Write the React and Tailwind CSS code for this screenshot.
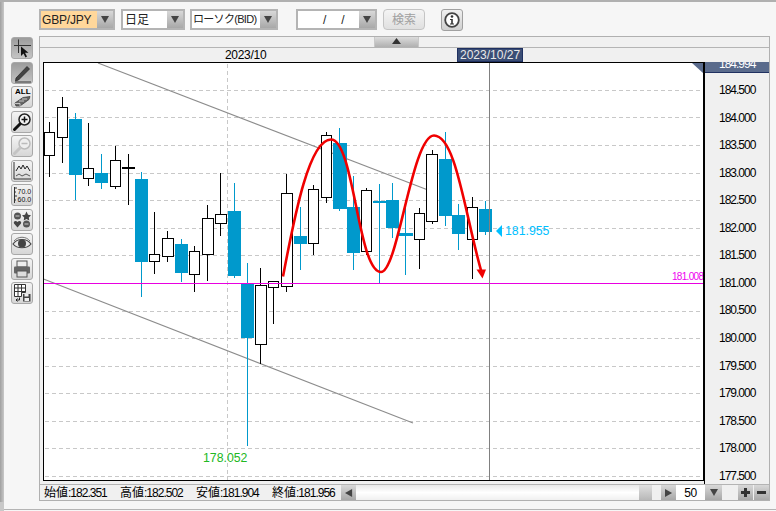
import React from "react";

const FONT = "font-['Liberation_Sans','Noto_Sans_CJK_JP',sans-serif]";
const GRID = [90, 117, 145, 173, 200, 228, 255.5, 311, 338, 366, 393, 421, 448, 476];
const PRICES = ["184.500","184.000","183.500","183.000","182.500","182.000","181.500","181.000","180.500","180.000","179.500","179.000","178.500","178.000","177.500"];
// cx, wickTop, wickBottom, bodyLeft, bodyRight, bodyTop, bodyBottom, kind
const C = [
  [49,122,177,44,54,132,155,"w"],[62,97,163,57,67,107,137,"w"],[75,113,200,69,81,119,175,"b"],[88,123,186,83,93,168,178,"w"],
  [101,154,189,95,107,173,183,"b"],[115,146,189,110,120,160,186,"w"],[128,154,205,122,134,167,169,"k"],[141,172,297,135,147,179,262,"b"],
  [154,212,274,149,159,254,261,"w"],[167,231,262,162,173,238,256,"w"],[181,239,282,175,187,244,273,"b"],[194,246,292,189,199,251,274,"w"],
  [207,205,281,202,213,218,254,"w"],[220,173,236,215,226,214,223,"w"],[234,183,278,228,240,211,276,"b"],[247,263,446,241,253,284,338,"b"],
  [260,268,364,255,266,285,344,"w"],[273,281,324,268,278,281,287,"w"],[286,174,292,281,292,193,286,"w"],[300,207,270,294,306,236,244,"b"],
  [313,185,255,308,318,189,243,"w"],[326,132,203,321,331,135,197,"w"],[339,128,211,333,346,143,209,"b"],[353,176,270,347,359,207,253,"b"],
  [366,188,255,361,371,190,251,"w"],[379,184,283,373,385,201,203,"b"],[392,183,238,386,398,200,228,"b"],[405,200,275,399,412,233,236,"b"],
  [419,208,269,414,424,213,239,"w"],[432,150,224,426,437,154,221,"w"],[445,132,226,439,451,159,216,"b"],[458,204,250,452,464,215,234,"b"],
  [472,197,279,467,477,207,239,"w"],[485,201,235,479,491,209,232,"b"],
];

function Candle({ c }) {
  const [x, t, b, l, r, bt, bb, k] = c;
  const col = k === "b" ? "#0099cc" : "#000";
  return (
    <g shapeRendering="crispEdges">
      <line x1={x + 0.5} x2={x + 0.5} y1={t} y2={b} stroke={col} />
      {k === "w" ? (
        <rect x={l + 0.5} y={bt + 0.5} width={r - l} height={bb - bt} fill="#fff" stroke="#000" />
      ) : (
        <rect x={l} y={bt} width={r - l + 1} height={bb - bt} fill={col} />
      )}
    </g>
  );
}

function Plot() {
  return (
    <svg width="661" height="419" viewBox="43 62 661 419" className="block shrink-0">
      <rect x="43" y="62" width="661" height="419" fill="#fff" />
      <g shapeRendering="crispEdges" stroke="#c8c8c8" strokeDasharray="4 3">
        {GRID.map((y) => <line key={y} x1="45" x2="702" y1={Math.floor(y) + 0.5} y2={Math.floor(y) + 0.5} />)}
        <line x1="227.5" x2="227.5" y1="64" y2="480" />
      </g>
      <line x1="98" y1="63" x2="428" y2="190" stroke="#8c8c8c" strokeWidth="1.1" />
      <line x1="43.5" y1="279" x2="413" y2="423" stroke="#8c8c8c" strokeWidth="1.1" />
      {C.map((c) => <Candle key={c[0]} c={c} />)}
      <line x1="44" x2="703" y1="283.5" y2="283.5" stroke="#e800e0" shapeRendering="crispEdges" />
      <line x1="489.5" x2="489.5" y1="63" y2="480" stroke="#808080" shapeRendering="crispEdges" />
      <path d="M283 276.5C293 225 308 139.5 331 139.5C354 139.5 358 272 381 272C398 272 412 135.5 434 135.5C456 135.5 465 215 481.5 272" fill="none" stroke="#f00000" strokeWidth="2.6" />
      <polygon points="476.500,269.500 486,269.500 482.500,278.500" fill="#f00000" />
      <polygon points="692,63 703,63 703,73" fill="#5a6b8c" />
      <polygon points="502,225 502,237 496,231" fill="#00bfff" />
      <text x="505" y="235" fontSize="12.3" fill="#00bfff" fontFamily="Liberation Sans">181.955</text>
      <text x="203" y="462" fontSize="12.3" fill="#22b822" fontFamily="Liberation Sans">178.052</text>
      <text x="672" y="280" fontSize="10" letterSpacing="-0.7" fill="#f000f0" fontFamily="Liberation Sans">181.008</text>
      <rect x="43.5" y="62.5" width="660" height="418" fill="none" stroke="#000" shapeRendering="crispEdges" />
    </svg>
  );
}

const Arrow = ({ dir = "down", size = 8, fill = "#444" }) => {
  const pts = { down: "0,0 9,0 4.5,8", up: "4.5,0 9,6 0,6", left: "8,0 8,9 0,4.5", right: "0,0 8,4.5 0,9" }[dir];
  return <svg width={size} height={size} viewBox="0 0 9 9"><polygon points={pts} fill={fill} /></svg>;
};

const ArrowBtn = ({ w = "w-[17px]", dir = "down" }) => (
  <div className={`${w} h-full flex items-center justify-center bg-linear-to-b from-[#d8d8d8] to-[#a8a8a8]`}>
    <Arrow dir={dir} />
  </div>
);

function Combo({ className, field, children }) {
  return (
    <div className={`h-[21px] flex border-2 border-[#b4b4b4] bg-white ${className}`}>
      <div className={`flex-1 min-w-0 flex items-center text-[#222] whitespace-nowrap ${field}`}>{children}</div>
      <ArrowBtn w="w-[16px]" />
    </div>
  );
}

function Tool({ pressed, children }) {
  return (
    <div className={`w-[22px] h-[22px] shrink-0 rounded-[3px] border border-[#a8a8a8] ${pressed ? "bg-linear-to-b from-[#9c9c9c] to-[#c4c4c4]" : "bg-linear-to-b from-[#f4f4f4] to-[#d6d6d6]"}`}>
      {children}
    </div>
  );
}

const Ic = ({ children }) => <svg width="20" height="20" viewBox="0 0 20 20" className="block">{children}</svg>;

function Tools() {
  return (
    <div className="w-[35px] shrink-0 pl-[7px] pt-[1px] flex flex-col gap-[2.5px]">
      <Tool pressed><Ic><path d="M2 7.5H19M6.5 1.500V15" stroke="#333" fill="none" /><path d="M9 8.500V18L11.500 15.500L13.500 19.500L15 18.500L13 14.800H16.500Z" fill="#111" /></Ic></Tool>
      <Tool pressed><Ic><path d="M4 15L15 3.500L17.500 6L6.500 17L3.500 18Z" fill="#444" stroke="#222" strokeWidth=".7" /><path d="M3 19H19" stroke="#333" /></Ic></Tool>
      <Tool><div className="relative h-full"><svg width="20" height="20" viewBox="0 0 20 20" className="block"><path d="M3 16L11 10.500L18 9.500L17 12.500L8 19L4 19Z" fill="#666" stroke="#333" strokeWidth=".7" /><path d="M3 16.500L8 16.500L8 19M7 14L12 14M10 12L15 12" stroke="#ddd" fill="none" strokeWidth=".8" /></svg><span className="absolute left-[3px] top-[0px] text-[8px] leading-[9px] font-bold text-black">ALL</span></div></Tool>
      <Tool><Ic><circle cx="12.500" cy="7.500" r="5.500" fill="#f4f4f4" stroke="#222" strokeWidth="1.500" /><path d="M9.500 7.500H15.500M12.500 4.500V10.500" stroke="#111" strokeWidth="1.500" /><path d="M8 12L2.500 17.500" stroke="#111" strokeWidth="3" strokeLinecap="round" /></Ic></Tool>
      <Tool><Ic><circle cx="12.500" cy="7.500" r="5.500" fill="#eee" stroke="#bbb" strokeWidth="1.500" /><path d="M9.500 7.500H15.500" stroke="#bbb" strokeWidth="1.500" /><path d="M8 12L2.500 17.500" stroke="#c4c4c4" strokeWidth="3" strokeLinecap="round" /></Ic></Tool>
      <Tool><Ic><path d="M2 1V18H19" stroke="#333" fill="none" /><path d="M4 10L7 5L9 8L11 4L13 8L15 5L18 10" stroke="#222" fill="none" /><path d="M4 15L7 13L10 15L14 13L18 15" stroke="#555" fill="none" /></Ic></Tool>
      <Tool><Ic><path d="M2.500 2V18M2.500 3H5M2.500 7H4M2.500 11H5M2.500 15H4" stroke="#333" fill="none" /><text x="5.500" y="8.800" fontSize="7" fontFamily="Liberation Sans" fill="#111">70.0</text><text x="5.500" y="16.800" fontSize="7" fontFamily="Liberation Sans" fill="#111">60.0</text></Ic></Tool>
      <Tool><Ic><circle cx="5.500" cy="6" r="3.500" fill="#555" /><path d="M3.500 6H7.500" stroke="#ccc" /><polygon points="14.500,1.500 16,4.800 19,5.200 16.800,7.400 17.300,10.500 14.500,9 11.700,10.500 12.200,7.400 10,5.200 13,4.800" fill="#444" /><path d="M5.500 17.500L2 13.500C1 11 4 10 5.500 12C7 10 10 11 9 13.500Z" fill="#444" /><circle cx="14.500" cy="14" r="3.500" fill="#555" /><path d="M12.500 14H16.500" stroke="#ccc" /></Ic></Tool>
      <Tool><Ic><path d="M1 10C5 4 15 4 19 10C15 15 5 15 1 10Z" fill="#e8e8e8" stroke="#444" strokeWidth="1.200" /><circle cx="10" cy="9.500" r="4" fill="#444" /><path d="M2 7C6 2 14 2 18 7" stroke="#777" fill="none" /></Ic></Tool>
      <Tool><Ic><rect x="5" y="2" width="10" height="6" fill="#eee" stroke="#555" /><rect x="2" y="7.500" width="16" height="7" rx="1" fill="#666" /><rect x="5" y="12" width="10" height="6" fill="#ddd" stroke="#555" /></Ic></Tool>
      <Tool><Ic><path d="M2.500 1.500H13.500V9.500H9.500V13.500H2.500ZM2.500 5H13.500M2.500 8.500H13.500M6 1.500V13.500M9.500 1.500V9.500" fill="#fff" stroke="#333" /><rect x="11" y="11" width="7.500" height="7.500" fill="#444" /><rect x="12.500" y="11" width="4" height="2.500" fill="#eee" /><rect x="12.500" y="15" width="4.500" height="3" fill="#eee" /><path d="M7.500 14.500V17H4M5.500 15.500L4 17L5.500 18.500" stroke="#222" fill="none" /></Ic></Tool>
    </div>
  );
}

function Axis() {
  return (
    <div className="w-[65px] shrink-0 h-full bg-[#f0f0f0] border-l border-black overflow-hidden">
      <div className="h-[11px] bg-[#5a6b8c] border-b border-[#1f3060] overflow-hidden pl-[14px] text-[12px] leading-[5px] text-white tracking-[-1px]">184.994</div>
      <div className="h-[3.2px]" />
      {PRICES.map((p) => (
        <div key={p} className="h-[27.57px] flex items-center pl-[14px] text-[12px] text-black tracking-[-1px] whitespace-nowrap">{p}</div>
      ))}
    </div>
  );
}

function Stat({ k, v }) {
  return <div className="w-[63px] shrink-0 whitespace-nowrap text-[12px] text-black"><span>{k}</span><span className="tracking-[-1px]">:{v}</span></div>;
}

function Status() {
  return (
    <div className="h-[16px] border-t border-[#b4b4b4] flex items-stretch bg-[#f0f0f0]">
      <div className="w-[301px] shrink-0 flex items-center gap-[13px] pl-[4px]">
        <Stat k="始値" v="182.351" />
        <Stat k="高値" v="182.502" />
        <Stat k="安値" v="181.904" />
        <Stat k="終値" v="181.956" />
      </div>
      <ArrowBtn w="w-[15px]" dir="left" />
      <div className="w-[283px] bg-linear-to-b from-[#e8e8e8] via-white to-[#f0f0f0]" />
      <div className="w-[13px] bg-linear-to-b from-[#e0e0e0] to-[#b8b8b8]" />
      <div className="w-[9px]" />
      <ArrowBtn w="w-[15px]" dir="right" />
      <div className="w-[29px] bg-white flex items-center justify-center text-[12px] tracking-[-0.5px] text-black">50</div>
      <ArrowBtn w="w-[17px]" />
      <div className="w-[16px]" />
      <div className="w-[15px] flex items-center justify-center bg-linear-to-b from-[#d8d8d8] to-[#a8a8a8]">
        <svg width="11" height="11" viewBox="0 0 11 11"><path d="M5.500 1V10M1 5.500H10" stroke="#333" strokeWidth="3" /></svg>
      </div>
      <div className="w-[1px]" />
      <div className="w-[15px] flex items-center justify-center bg-linear-to-b from-[#d8d8d8] to-[#a8a8a8]">
        <svg width="11" height="11" viewBox="0 0 11 11"><path d="M1 5.500H10" stroke="#333" strokeWidth="3" /></svg>
      </div>
    </div>
  );
}

export default function App() {
  return (
    <div className={`w-[776px] h-[511px] flex flex-col bg-[#f6f6f6] border-t-2 border-[#b0b0b0] overflow-hidden ${FONT}`}>
      <div className="flex flex-1 min-h-0">
        <div className="w-[4px] shrink-0 bg-linear-to-r from-[#a0a0a0] to-[#c8c8c8]" />
        <div className="flex-1 flex flex-col">
          {/* top toolbar */}
          <div className="h-[34px] shrink-0 flex items-start pt-[7px] pl-[35px]">
            <Combo className="w-[76px]" field="bg-[#ffd79b] pl-[1px] text-[12px] tracking-[-0.2px]">GBP/JPY</Combo>
            <Combo className="w-[64px] ml-[6px]" field="text-[12px] pl-[2px]">日足</Combo>
            <Combo className="w-[88px] ml-[5px]" field="text-[11px] tracking-[-0.7px] pl-[1px]">ローソク(BID)</Combo>
            <Combo className="w-[81px] ml-[18px]" field="text-[12px] pl-[25px] gap-[15px]"><span>/</span><span>/</span></Combo>
            <div className="w-[42px] h-[21px] ml-[6px] rounded-[4px] border border-[#c4c4c4] bg-linear-to-b from-[#f4f4f4] to-[#e0e0e0] flex items-center justify-center text-[12px] text-[#a0a0a0]">検索</div>
            <div className="w-[22px] h-[22px] ml-[16px] rounded-[3px] border border-[#a0a0a0] bg-linear-to-b from-[#f0f0f0] to-[#d0d0d0] flex items-center justify-center">
              <svg width="16" height="16" viewBox="0 0 16 16"><circle cx="8" cy="8" r="6.800" fill="#fff" stroke="#444" strokeWidth="1.800" /><circle cx="8" cy="4.500" r="1.300" fill="#333" /><path d="M6 7H8.800V11.500H10V12.500H6V11.500H7.200V8H6Z" fill="#333" /></svg>
            </div>
          </div>
          <div className="flex flex-1 min-h-0">
            <Tools />
            {/* chart panel */}
            <div className="w-[731px] h-[465px] shrink-0 border border-[#b0b0b0] flex flex-col">
              <div className="h-[11px] shrink-0 border-b border-[#b4b4b4] bg-[#f0f0f0] flex justify-start pl-[334px]">
                <div className="w-[45px] h-full bg-linear-to-b from-[#dcdcdc] to-[#b0b0b0] border-x border-[#c8c8c8] flex items-center justify-center"><Arrow dir="up" size={9} fill="#333" /></div>
              </div>
              <div className="h-[14px] shrink-0 bg-[#f0f0f0] flex items-stretch text-[12px] text-black">
                <span className="ml-[185px] w-[41px] leading-[14px] tracking-[-0.3px]">2023/10</span>
                <div className="ml-[191px] w-[66px] bg-[#3a4d75] border border-[#1f3060] text-[#e8e8e8] leading-[13px] pl-[2px]">2023/10/27</div>
              </div>
              <div className="h-[422px] shrink-0 flex bg-[#f0f0f0] overflow-hidden">
                <div className="w-[3px] shrink-0" />
                <Plot />
                <Axis />
              </div>
              <Status />
            </div>
          </div>
        </div>
      </div>
      <div className="h-[9px] shrink-0 flex items-start">
        <div className="w-[4px] h-full bg-[#c8c8c8]" />
        <div className="flex-1 h-[8px] border-b border-[#b4b4b4]" />
      </div>
    </div>
  );
}
